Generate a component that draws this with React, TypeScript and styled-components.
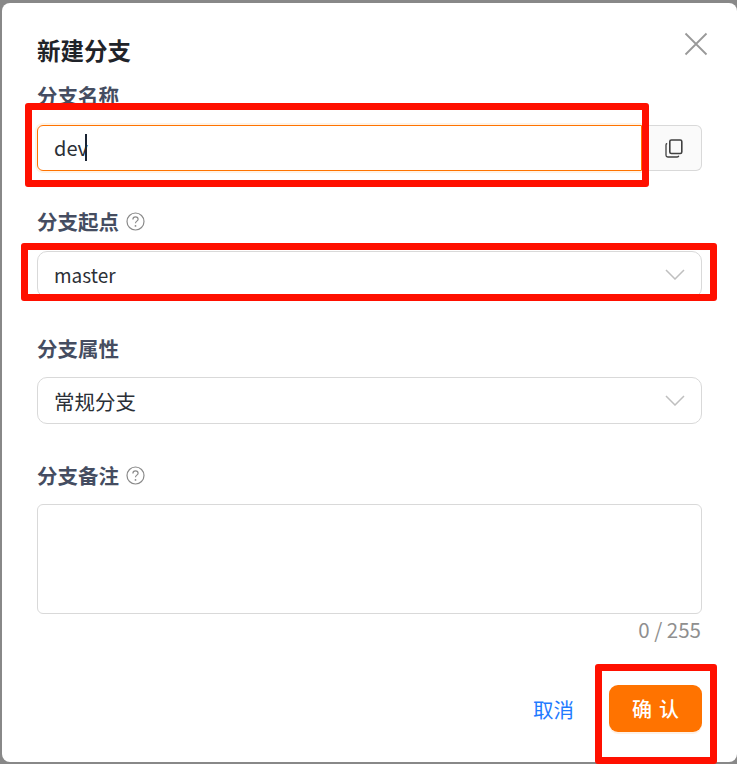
import React from 'react'
import styled, { createGlobalStyle } from 'styled-components'

const GlobalStyle = createGlobalStyle`
  html, body {
    margin: 0;
    padding: 0;
    height: 764px;
    overflow: hidden;
    background: #888888;
  }
  * {
    box-sizing: border-box;
  }
`

const Backdrop = styled.div`
  position: relative;
  width: 737px;
  height: 764px;
  padding: 3px 0 2px 2px;
  font-family: 'Noto Sans CJK SC', 'Noto Sans', sans-serif;
`

const Modal = styled.div`
  position: relative;
  height: 759px;
  background: #ffffff;
  border-radius: 8px;
  padding: 33px 35px 0 35px;
  display: flex;
  flex-direction: column;
`

const Title = styled.div`
  font-size: 23.5px;
  line-height: 28px;
  font-weight: 700;
  color: #1f2329;
`

const CloseButton = styled.div`
  position: absolute;
  top: 29px;
  right: 29px;
  width: 24px;
  height: 24px;
  color: #999999;
`

const Field = styled.div<{ $top: number }>`
  margin-top: ${(p) => p.$top}px;
`

const Label = styled.div`
  display: flex;
  align-items: center;
  gap: 7px;
  height: 28px;
  font-size: 20.5px;
  font-weight: 700;
  color: #454d61;
`

const HelpIcon = styled.svg`
  width: 19px;
  height: 19px;
  color: #8a8a8a;
  margin-top: 1px;
`

const InputGroup = styled.div`
  display: flex;
  margin-top: 16px;
  height: 46px;
`

const TextInput = styled.div`
  flex: 1;
  display: flex;
  align-items: center;
  padding: 0 0 2px 16px;
  font-size: 20px;
  color: #2b2f36;
  border: 1px solid #ff7300;
  border-radius: 6px 0 0 6px;
  box-shadow: 0 0 0 2px #fff3e6;
`

const Caret = styled.span`
  display: inline-block;
  width: 2px;
  height: 27px;
  margin-left: -3px;
  background: #1a2433;
`

const CopyAddon = styled.div`
  width: 60px;
  display: flex;
  align-items: center;
  justify-content: center;
  padding-left: 5px;
  background: #fafafa;
  border: 1px solid #d9d9d9;
  border-left: none;
  border-radius: 0 6px 6px 0;
  color: #404040;
`

const Select = styled.div<{ $top: number }>`
  display: flex;
  align-items: center;
  justify-content: space-between;
  height: 47px;
  margin-top: ${(p) => p.$top}px;
  padding: 0 16px;
  color: #2b2f36;
  border: 1px solid #d9d9d9;
  border-radius: 10px;
`

const SelectValue = styled.span<{ $size: number }>`
  font-size: ${(p) => p.$size}px;
`

const Chevron = styled.svg`
  width: 20px;
  height: 11px;
  color: #bfbfbf;
`

const TextArea = styled.div`
  height: 110px;
  margin-top: 15px;
  border: 1px solid #d9d9d9;
  border-radius: 6px;
`

const Counter = styled.div`
  text-align: right;
  font-size: 20.5px;
  line-height: 24px;
  margin-top: 3px;
  padding-right: 1px;
  color: #8f8f8f;
`

const Footer = styled.div`
  display: flex;
  justify-content: flex-end;
  align-items: center;
  gap: 35px;
  margin-top: 44px;
`

const CancelLink = styled.span`
  font-size: 20.5px;
  color: #1f7bff;
`

const ConfirmButton = styled.div`
  width: 93px;
  height: 47px;
  display: flex;
  align-items: center;
  justify-content: center;
  gap: 7px;
  font-size: 20px;
  font-weight: 500;
  color: #ffffff;
  background: #ff7300;
  border-radius: 9px;
  box-shadow: 0 2px 0 rgba(255, 115, 0, 0.1);
`

const Annotation = styled.div<{ $x: number; $y: number; $w: number; $h: number }>`
  position: absolute;
  left: ${(p) => p.$x}px;
  top: ${(p) => p.$y}px;
  width: ${(p) => p.$w}px;
  height: ${(p) => p.$h}px;
  border: 7px solid #ff1000;
  border-radius: 3px;
  pointer-events: none;
`

function Help() {
  return (
    <HelpIcon viewBox="0 0 19 19" fill="none" stroke="currentColor">
      <circle cx="9.5" cy="9.5" r="8.5" strokeWidth="1.2" />
      <path d="M6.9 7.4c0-1.5 1.2-2.5 2.6-2.5s2.6 1 2.6 2.3c0 1.9-2.6 2-2.6 4" strokeWidth="1.2" />
      <circle cx="9.5" cy="13.9" r="0.9" fill="currentColor" stroke="none" />
    </HelpIcon>
  )
}

function Arrow() {
  return (
    <Chevron viewBox="0 0 20 11" fill="none" stroke="currentColor">
      <path d="M1 1l9 9 9-9" strokeWidth="1.5" />
    </Chevron>
  )
}

export default function App() {
  return (
    <>
      <GlobalStyle />
      <Backdrop>
        <Modal>
          <Title>新建分支</Title>
          <CloseButton>
            <svg width="24" height="24" viewBox="0 0 24 24" fill="none" stroke="currentColor">
              <path d="M1.5 1.5l21 21M22.5 1.5l-21 21" strokeWidth="1.8" />
            </svg>
          </CloseButton>

          <Field $top={17}>
            <Label>分支名称</Label>
            <InputGroup>
              <TextInput>
                dev
                <Caret />
              </TextInput>
              <CopyAddon>
                <svg width="18" height="19" viewBox="0 0 18 19" fill="none" stroke="currentColor">
                  <rect x="4.8" y="1" width="12" height="13.5" rx="1.6" strokeWidth="1.6" />
                  <path d="M2.2 4.5A1.4 1.4 0 0 0 1 6v10.2C1 17.2 1.8 18 2.8 18h9.4c.8 0 1.4-.5 1.6-1.2" strokeWidth="1.3" />
                </svg>
              </CopyAddon>
            </InputGroup>
          </Field>

          <Field $top={36}>
            <Label>
              分支起点
              <Help />
            </Label>
            <Select $top={16}>
              <SelectValue $size={19}>master</SelectValue>
              <Arrow />
            </Select>
          </Field>

          <Field $top={36}>
            <Label>分支属性</Label>
            <Select $top={15}>
              <SelectValue $size={20.5}>常规分支</SelectValue>
              <Arrow />
            </Select>
          </Field>

          <Field $top={37}>
            <Label>
              分支备注
              <Help />
            </Label>
            <TextArea />
            <Counter>0 / 255</Counter>
          </Field>

          <Footer>
            <CancelLink>取消</CancelLink>
            <ConfirmButton>
              <span>确</span>
              <span>认</span>
            </ConfirmButton>
          </Footer>
        </Modal>

        <Annotation $x={25} $y={103} $w={624} $h={84} />
        <Annotation $x={21} $y={243} $w={696} $h={58} />
        <Annotation $x={595} $y={664} $w={122} $h={100} />
      </Backdrop>
    </>
  )
}
